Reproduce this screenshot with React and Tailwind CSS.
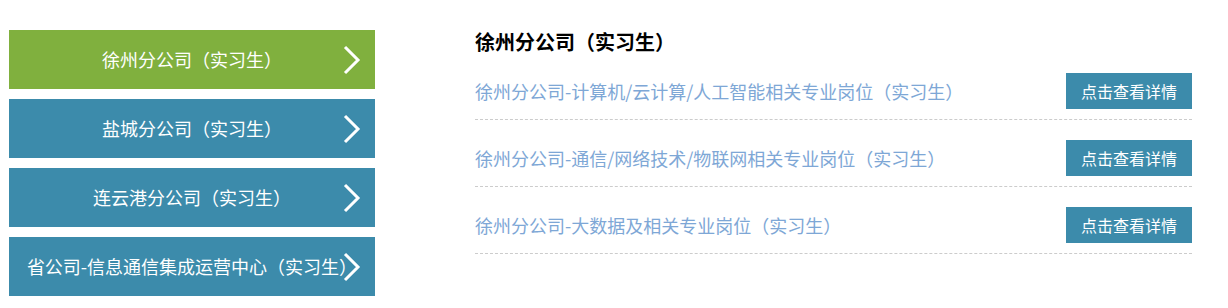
const font = { fontFamily: '"Microsoft YaHei", "Noto Sans CJK SC", sans-serif' };

const branches = [
  { name: '徐州分公司（实习生）', active: true },
  { name: '盐城分公司（实习生）' },
  { name: '连云港分公司（实习生）' },
  { name: '省公司-信息通信集成运营中心（实习生）' },
];

const jobs = [
  '徐州分公司-计算机/云计算/人工智能相关专业岗位（实习生）',
  '徐州分公司-通信/网络技术/物联网相关专业岗位（实习生）',
  '徐州分公司-大数据及相关专业岗位（实习生）',
];

function Chevron() {
  return (
    <svg width="20" height="30" viewBox="0 0 20 30" className="absolute right-[13px] top-1/2 -translate-y-1/2">
      <path d="M3 2 L16 15 L3 28" fill="none" stroke="#fff" strokeWidth="3" />
    </svg>
  );
}

export default function App() {
  return (
    <div className="w-[1228px] h-[308px] bg-white flex pt-[30px] pl-[9px]" style={font}>
      <div className="w-[366px] flex flex-col gap-[10px]">
        {branches.map((b) => (
          <div
            key={b.name}
            className={
              'relative h-[59px] flex items-center justify-center text-[18px] text-white whitespace-nowrap ' +
              (b.active ? 'bg-[#80b03e]' : 'bg-[#3c8bab]')
            }
          >
            <span>{b.name}</span>
            <Chevron />
          </div>
        ))}
      </div>

      <div className="ml-[100px] w-[717px]">
        <h2 className="text-[20px] font-bold text-black leading-[24px]">徐州分公司（实习生）</h2>
        <ul className="mt-[9px]">
          {jobs.map((j) => (
            <li
              key={j}
              className="flex items-center justify-between pt-[20px] pb-[10px] border-b border-dashed border-[#cccccc] h-[67px] first:h-[57px] first:pt-[10px]"
            >
              <span className="text-[18px] text-[#7ea7d6]">{j}</span>
              <button className="w-[126px] h-[36px] bg-[#3c8bab] text-white text-[16px]">点击查看详情</button>
            </li>
          ))}
        </ul>
      </div>
    </div>
  );
}
